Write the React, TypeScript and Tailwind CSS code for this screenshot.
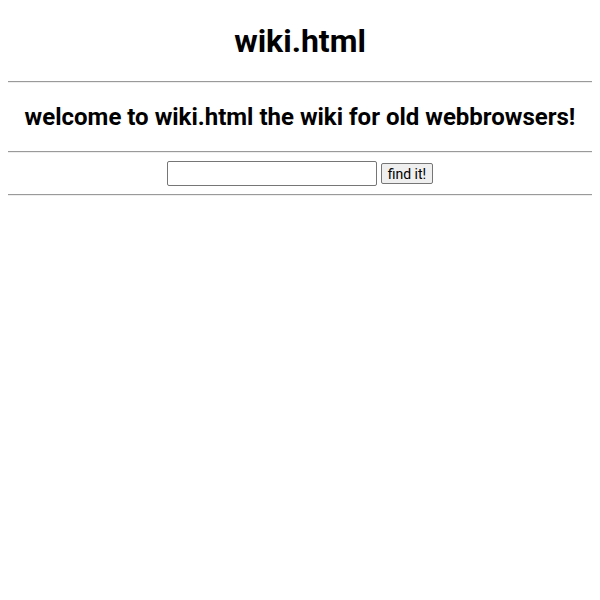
export default function App() {
  return (
    <div className="mx-2 bg-white text-black" style={{ fontFamily: "Roboto, sans-serif" }}>
      <h1 className="pt-[22px] mb-[21px] text-center text-[32px] font-bold leading-[38px]">
        wiki.html
      </h1>
      <hr className="h-0 border-t border-b border-t-[#9a9a9a] border-b-[#eeeeee]" />
      <h2 className="my-[20px] text-center text-[24px] font-bold leading-[28px]">
        welcome to wiki.html the wiki for old webbrowsers!
      </h2>
      <hr className="h-0 border-t border-b border-t-[#9a9a9a] border-b-[#eeeeee]" />
      <div className="flex items-center justify-center gap-1 py-[8px]">
        <input className="h-[25px] w-[210px] rounded-[2px] border border-[#767676] px-[2px] text-[13px]" />
        <button className="h-[21px] rounded-[2px] border border-[#767676] bg-[#efefef] px-[6px] text-[14px] leading-[16px]">
          find it!
        </button>
      </div>
      <hr className="h-0 border-t border-b border-t-[#9a9a9a] border-b-[#eeeeee]" />
    </div>
  );
}
